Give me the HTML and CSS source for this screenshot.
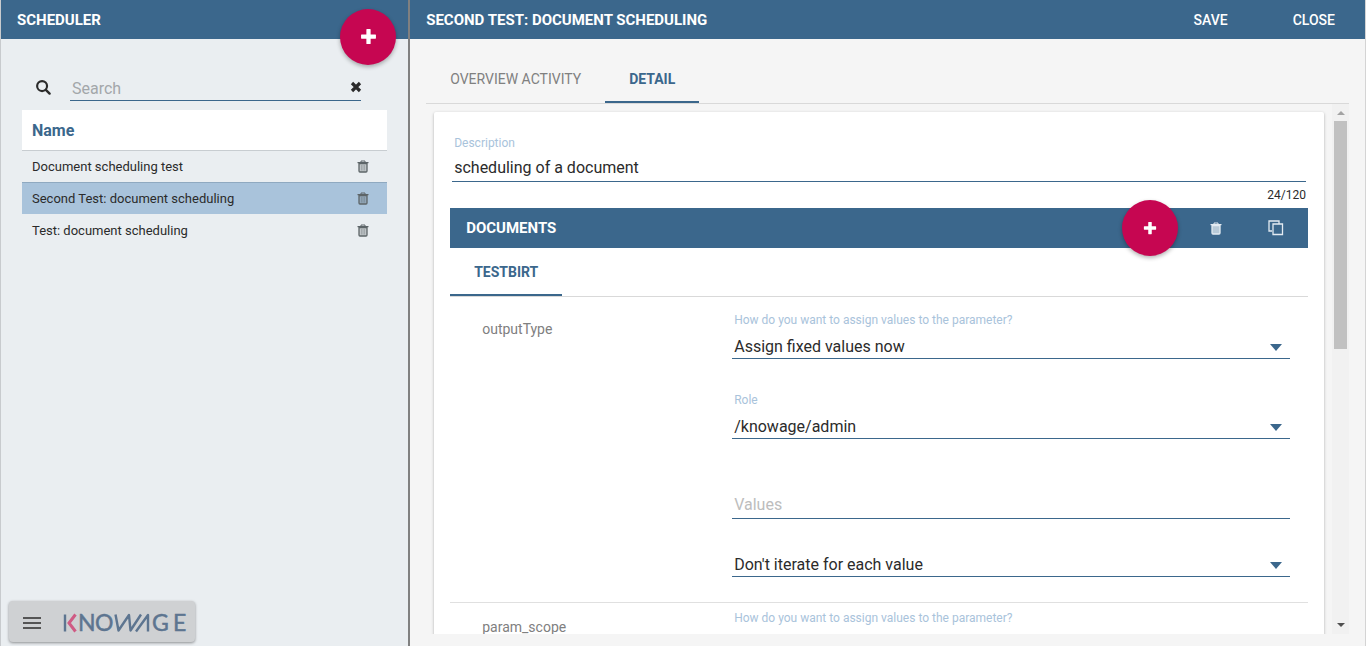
FILE: index.html
```html
<!DOCTYPE html>
<html lang="en">
<head>
<meta charset="utf-8">
<meta name="viewport" content="width=device-width, initial-scale=1">
<title>Scheduler</title>
<link rel="stylesheet" href="styles.css">
</head>
<body>
<svg class="sprite" aria-hidden="true">
  <symbol id="i-trash" viewBox="0 0 12 13">
    <path d="M4 2V1h4v1" fill="none" stroke="currentColor" stroke-width="1"/>
    <path d="M0.500 2h11v1.200h-11z" fill="currentColor"/>
    <path d="M2 3.500h8v7.500a1 1 0 0 1-1 1H3a1 1 0 0 1-1-1z" fill="currentColor" fill-opacity="0.300" stroke="currentColor" stroke-width="1.300"/>
    <path d="M4.500 5v5.500M6 5v5.500M7.500 5v5.500" stroke="currentColor" stroke-width="0.300"/>
  </symbol>
  <symbol id="i-trash-solid" viewBox="0 0 12 13">
    <path d="M4 2V1h4v1" fill="none" stroke="currentColor" stroke-width="1"/>
    <path d="M0.500 2h11v1.200h-11z" fill="currentColor"/>
    <path d="M2 3.500h8v7.500a1 1 0 0 1-1 1H3a1 1 0 0 1-1-1z" fill="currentColor" fill-opacity="0.750" stroke="currentColor" stroke-width="1.300"/>
  </symbol>
  <symbol id="i-plus" viewBox="0 0 16 16">
    <path d="M6 1.500Q6 1 6.500 1h3q.5 0 .5.500V6h4.500q.5 0 .5.500v3q0 .5-.5.500H10v4.500q0 .5-.5.500h-3q-.5 0-.5-.5V10H1.500Q1 10 1 9.500v-3Q1 6 1.500 6H6z" fill="currentColor"/>
  </symbol>
  <symbol id="i-caret" viewBox="0 0 12 7"><path d="M0 0h12L6 7z" fill="currentColor"/></symbol>
</svg>
<div class="app">
  <aside class="sidebar">
    <header class="toolbar sidebar-toolbar">
      <h1 class="title">SCHEDULER</h1>
      <button class="fab sidebar-fab" type="button" aria-label="Add scheduler"><svg class="plus-large"><use href="#i-plus"/></svg></button>
    </header>
    <div class="sidebar-body">
      <div class="search">
        <svg class="search-icon" viewBox="0 0 16 16" aria-hidden="true"><circle cx="6.500" cy="6.500" r="5.300" fill="none" stroke="currentColor" stroke-width="2.300"/><path d="M10.500 10.500l4 4" stroke="currentColor" stroke-width="2.500" stroke-linecap="round"/></svg>
        <div class="search-box">
          <input class="search-input" type="text" placeholder="Search" aria-label="Search">
          <button class="clear" type="button" aria-label="Clear search"><svg class="clear-icon" viewBox="0 0 12 12"><path d="M2 2l8 8M10 2l-8 8" stroke="currentColor" stroke-width="3.200"/></svg></button>
        </div>
      </div>
      <table class="list">
        <thead><tr><th scope="col" colspan="2">Name</th></tr></thead>
        <tbody>
          <tr><td>Document scheduling test</td><td class="cell-action"><button class="icon-btn" type="button" aria-label="Delete Document scheduling test"><svg class="trash"><use href="#i-trash"/></svg></button></td></tr>
          <tr class="selected"><td>Second Test: document scheduling</td><td class="cell-action"><button class="icon-btn" type="button" aria-label="Delete Second Test: document scheduling"><svg class="trash"><use href="#i-trash"/></svg></button></td></tr>
          <tr><td>Test: document scheduling</td><td class="cell-action"><button class="icon-btn" type="button" aria-label="Delete Test: document scheduling"><svg class="trash"><use href="#i-trash"/></svg></button></td></tr>
        </tbody>
      </table>
    </div>
    <button class="brand" type="button" aria-label="Open Knowage menu">
      <svg class="burger" viewBox="0 0 18 12"><path d="M0 1h18M0 6h18M0 11h18" stroke="currentColor" stroke-width="2"/></svg>
      <svg class="logo" viewBox="0 0 126 32">
        <path d="M2 7.500v17" class="logo-line"/>
        <path d="M12.500 7.500L6 16l6.500 8.500" class="logo-mark"/>
        <text class="logo-text" x="15 32" y="24">NO</text>
        <path d="M52.500 7.500l3 16L66 8l1.500 15.500L78 7.500M73 24.500L85 8v16.500" class="logo-line"/>
        <text class="logo-text" x="89 110" y="24">GE</text>
      </svg>
    </button>
  </aside>

  <main class="main">
    <header class="toolbar">
      <h2 class="title">SECOND TEST: DOCUMENT SCHEDULING</h2>
      <button class="text-btn" type="button">SAVE</button>
      <button class="text-btn" type="button">CLOSE</button>
    </header>
    <div class="main-body">
      <nav class="tabs" role="tablist">
        <button class="tab" type="button" role="tab" aria-selected="false">OVERVIEW ACTIVITY</button>
        <button class="tab active" type="button" role="tab" aria-selected="true">DETAIL</button>
      </nav>
      <div class="scroller">
        <div class="viewport">
          <section class="card">
            <div class="description">
              <label class="label" for="description">Description</label>
              <input class="control" id="description" type="text" maxlength="120" value="scheduling of a document">
              <div class="counter">24/120</div>
            </div>
            <header class="toolbar documents-toolbar">
              <h3 class="title">DOCUMENTS</h3>
              <button class="fab" type="button" aria-label="Add document"><svg class="plus-small"><use href="#i-plus"/></svg></button>
              <div class="doc-actions">
                <button class="doc-btn" type="button" aria-label="Delete document"><svg class="trash"><use href="#i-trash-solid"/></svg></button>
                <button class="doc-btn" type="button" aria-label="Copy document"><svg class="copy" viewBox="0 0 16 16"><path d="M4 11H1V1h10v3M5 4h9.500v10.500H5z" fill="none" stroke="currentColor" stroke-width="1.300"/></svg></button>
              </div>
            </header>
            <nav class="tabs" role="tablist">
              <button class="tab active" type="button" role="tab" aria-selected="true">TESTBIRT</button>
            </nav>
            <div class="params">
              <div class="param">
                <div class="param-name">outputType</div>
                <div class="param-fields">
                  <div class="field">
                    <label class="label" for="mode1">How do you want to assign values to the parameter?</label>
                    <div class="select"><select class="control" id="mode1"><option>Assign fixed values now</option></select><svg class="caret"><use href="#i-caret"/></svg></div>
                  </div>
                  <div class="field">
                    <label class="label" for="role">Role</label>
                    <div class="select"><select class="control" id="role"><option>/knowage/admin</option></select><svg class="caret"><use href="#i-caret"/></svg></div>
                  </div>
                  <div class="field"><input class="control" type="text" placeholder="Values" aria-label="Values"></div>
                  <div class="field">
                    <div class="select"><select class="control" aria-label="Iteration"><option>Don't iterate for each value</option></select><svg class="caret"><use href="#i-caret"/></svg></div>
                  </div>
                </div>
              </div>
              <div class="param">
                <div class="param-name">param_scope</div>
                <div class="param-fields">
                  <div class="field">
                    <label class="label" for="mode2">How do you want to assign values to the parameter?</label>
                    <div class="select"><select class="control" id="mode2"><option>Assign fixed values now</option></select><svg class="caret"><use href="#i-caret"/></svg></div>
                  </div>
                </div>
              </div>
            </div>
          </section>
        </div>
        <div class="scrollbar" aria-hidden="true">
          <svg class="arrow arrow-up" viewBox="0 0 8 4"><path d="M4 0l4 4H0z" fill="currentColor"/></svg>
          <div class="track"><div class="thumb"></div></div>
          <svg class="arrow arrow-down" viewBox="0 0 8 4"><path d="M0 0h8L4 4z" fill="currentColor"/></svg>
        </div>
      </div>
    </div>
  </main>
</div>
</body>
</html>
```
FILE: styles.css
```css
* { box-sizing: border-box; }
body {
  margin: 0;
  font-family: Roboto, "Liberation Sans", sans-serif;
  color: #2b2b2b;
}
button, input, select { font: inherit; color: inherit; border: 0; padding: 0; background: none; border-radius: 0; outline: 0; }
button { cursor: pointer; }
svg { display: block; }
.sprite { position: absolute; width: 0; height: 0; }

.app {
  display: flex;
  height: 100vh;
  border-left: 1px solid #c8cbce;
  border-right: 1px solid #d4d4d4;
  overflow: hidden;
}
.sidebar {
  position: relative;
  flex: 0 0 30%;
  background: #eaeef1;
  border-right: 2px solid #808080;
}
.main {
  flex: 1;
  min-width: 0;
  display: flex;
  flex-direction: column;
  background: #f5f5f5;
}
.toolbar {
  display: flex;
  align-items: center;
  flex: none;
  height: 39px;
  padding: 0 16px;
  background: #3b678c;
  color: #fff;
}
.title { flex: 1; margin: 0; font-size: 15px; font-weight: 700; line-height: 20px; }
.text-btn { height: 36px; padding: 0 14px; margin-left: 37px; font-size: 14px; font-weight: 500; }

.fab {
  display: grid;
  place-items: center;
  flex: none;
  width: 56px;
  height: 56px;
  border-radius: 50%;
  background: #c60651;
  color: #fff;
  box-shadow: 0 2px 4px rgba(0, 0, 0, 0.3);
}
.sidebar-fab { position: absolute; top: 9px; right: 12px; }
.plus-large { width: 17px; height: 17px; margin-bottom: 2px; }
.plus-small { width: 14px; height: 14px; }

.sidebar-body { padding: 34px 21px 0 21px; }
.search { display: flex; align-items: center; padding: 0 26px 0 14px; gap: 19px; }
.search-icon { flex: none; width: 15px; height: 15px; }
.search-box { flex: 1; display: flex; height: 28px; border-bottom: 1px solid #3b678c; }
.search-input { flex: 1; min-width: 0; padding: 3px 2px 0; font-size: 16px; }
.search-input::placeholder { color: #a3a7aa; opacity: 1; }
.clear { width: 11px; }
.clear-icon { width: 12px; height: 12px; }

.list { width: 100%; margin-top: 9px; border-collapse: collapse; font-size: 13px; }
.list th {
  height: 40px;
  padding: 1px 10px 0;
  text-align: left;
  font-size: 16px;
  font-weight: 700;
  color: #3b678c;
  background: #fff;
  border-bottom: 1px solid #c8cdd1;
}
.list td { height: 32px; padding: 0 0 0 10px; }
.list .cell-action { width: 47px; padding: 0 9px 0 0; }
.selected { background: #a9c3db; box-shadow: inset 0 1px 0 #8fa9c0; }
.icon-btn { display: block; width: 30px; height: 30px; margin-left: auto; color: #5d6568; }
.icon-btn .trash, .doc-btn .trash { margin: 0 auto; }
.trash { width: 12px; height: 13px; }

.brand {
  position: absolute;
  left: 8px;
  bottom: 4px;
  display: flex;
  align-items: center;
  gap: 22px;
  height: 41px;
  padding: 3px 6px 0 14px;
  border-radius: 4px;
  background: #cfd1d3;
  box-shadow: 0 1px 3px rgba(0, 0, 0, 0.4);
  color: #555;
}
.burger { width: 18px; height: 12px; }
.logo { width: 126px; height: 32px; }
.logo-line { fill: none; stroke: #5d7590; stroke-width: 2.400; stroke-linejoin: round; }
.logo-mark { fill: none; stroke: #cf5b84; stroke-width: 3; }
.logo-text { font-family: Lato, sans-serif; font-size: 23px; fill: #5d7590; stroke: #5d7590; stroke-width: 0.500; }

.main-body { flex: 1; min-height: 0; display: flex; flex-direction: column; padding: 16px 16px 12px; }
.tabs { display: flex; flex: none; height: 49px; border-bottom: 1px solid #d9d9d9; }
.tab {
  height: 48px;
  padding: 2px 24px 0;
  font-size: 14px;
  color: #808080;
  border-bottom: 2px solid transparent;
}
.tab.active { color: #3b678c; font-weight: 700; border-bottom-color: #3b678c; }

.scroller { flex: 1; min-height: 0; display: flex; }
.viewport { flex: 1; min-width: 0; overflow: hidden; padding: 8px; }
.card { padding: 16px; background: #fff; border-radius: 2px; box-shadow: 0 1px 3px rgba(0, 0, 0, 0.3); }

.label { display: block; padding: 0 2px; font-size: 12px; line-height: 16px; color: #a9c3db; }
.control {
  display: block;
  width: 100%;
  height: 31px;
  padding: 2px 2px 0;
  font-size: 16px;
  border-bottom: 1px solid #3b678c;
  appearance: none;
}
select.control { padding-top: 6px; }
.control::placeholder { color: #bdbdbd; opacity: 1; }
.description { padding: 7px 2px 5px; }
.counter { padding-top: 5px; font-size: 12px; line-height: 16px; text-align: right; }

.documents-toolbar { height: 40px; padding-right: 12px; }
.doc-actions { display: flex; gap: 20px; margin-left: 18px; color: #e3ebf2; }
.doc-btn { width: 40px; height: 40px; }
.copy { width: 16px; height: 16px; margin: 0 auto; }

.params { padding-top: 8px; }
.param { display: flex; padding: 7px 18px 25px 32px; border-bottom: 1px solid #e0e0e0; }
.param-name { flex: 0 0 250px; padding-top: 9px; font-size: 14px; line-height: 16px; color: #808080; }
.param-fields { flex: 1; min-width: 0; }
.field + .field { margin-top: 33px; }
.select { display: grid; align-items: center; }
.select > * { grid-area: 1 / 1; }
.caret { justify-self: end; width: 12px; height: 7px; margin-right: 8px; margin-top: 8px; color: #3b678c; pointer-events: none; }
.field:nth-child(3) { margin-top: 49px; }
.field:nth-child(4) { margin-top: 27px; }

.scrollbar { display: flex; flex-direction: column; align-items: center; flex: 0 0 17px; background: #f1f1f1; }
.arrow { flex: none; width: 8px; height: 4px; }
.arrow-up { margin: 7px 0 6px; color: #a3a3a3; }
.arrow-down { margin: 6px 0 7px; color: #505050; }
.track { flex: 1; width: 13px; }
.thumb { height: 46%; background: #c1c1c1; }
```
